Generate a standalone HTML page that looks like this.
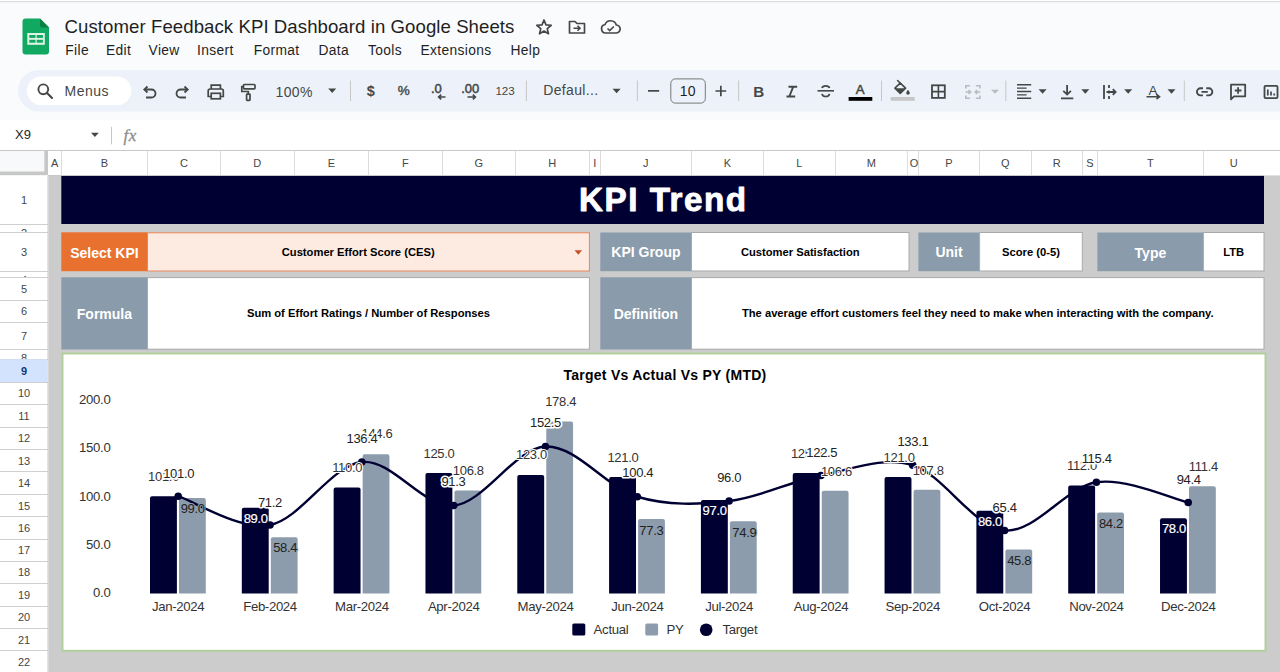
<!DOCTYPE html>
<html><head><meta charset="utf-8"><title>KPI Trend</title>
<style>
*{margin:0;padding:0}
html,body{width:1280px;height:672px;overflow:hidden;background:#ffffff}
svg{display:block;font-family:"Liberation Sans", sans-serif}
</style></head><body>
<svg width="1280" height="672" viewBox="0 0 1280 672">
<rect x="0" y="0" width="1280" height="120" fill="#f9fbfd"/>
<rect x="0" y="0" width="1280" height="1" fill="#ffffff"/>
<rect x="0" y="1" width="1280" height="1.2" fill="#dadce0"/>
<path d="M25.5 18.5 H40 L49 27.5 V51.5 Q49 54.5 46 54.5 H25.5 Q22.5 54.5 22.5 51.5 V21.5 Q22.5 18.5 25.5 18.5Z" fill="#11a861"/>
<path d="M40 18.5 L49 27.5 H42 Q40 27.5 40 25.5Z" fill="#0b8043"/>
<rect x="27.3" y="33" width="17.5" height="11.8" fill="#ddf3e4"/>
<rect x="29.3" y="35" width="6.2" height="2.9" fill="#11a861"/><rect x="36.7" y="35" width="6.2" height="2.9" fill="#11a861"/>
<rect x="29.3" y="39.8" width="6.2" height="2.9" fill="#11a861"/><rect x="36.7" y="39.8" width="6.2" height="2.9" fill="#11a861"/>
<text x="64.6" y="32.8" font-size="18.6" font-weight="400" fill="#1f1f1f" text-anchor="start" letter-spacing="0.07">Customer Feedback KPI Dashboard in Google Sheets</text>
<polygon points="544.00,20.00 546.00,24.85 551.23,25.25 547.23,28.65 548.47,33.75 544.00,31.00 539.53,33.75 540.77,28.65 536.77,25.25 542.00,24.85" fill="none" stroke="#444746" stroke-width="1.7" stroke-linejoin="round"/>
<path d="M569.5 21.5 H575 L577 23.5 H584.5 V33 H569.5 Z" fill="none" stroke="#444746" stroke-width="1.7" stroke-linejoin="round"/>
<path d="M573.5 28.2 H580 M577.5 25.7 L580 28.2 L577.5 30.7" fill="none" stroke="#444746" stroke-width="1.6"/>
<path d="M605.5 33 H616 A4 4 0 0 0 616.3 25 A6 6 0 0 0 605 24.5 A4.3 4.3 0 0 0 605.5 33Z" fill="none" stroke="#444746" stroke-width="1.7"/>
<path d="M607.5 28.5 L609.7 30.6 L613.8 26.5" fill="none" stroke="#444746" stroke-width="1.6"/>
<text x="65.3" y="54.7" font-size="13.8" font-weight="400" fill="#1f1f1f" text-anchor="start" letter-spacing="0.35">File</text>
<text x="106" y="54.7" font-size="13.8" font-weight="400" fill="#1f1f1f" text-anchor="start" letter-spacing="0.35">Edit</text>
<text x="148.6" y="54.7" font-size="13.8" font-weight="400" fill="#1f1f1f" text-anchor="start" letter-spacing="0.35">View</text>
<text x="197" y="54.7" font-size="13.8" font-weight="400" fill="#1f1f1f" text-anchor="start" letter-spacing="0.35">Insert</text>
<text x="253.7" y="54.7" font-size="13.8" font-weight="400" fill="#1f1f1f" text-anchor="start" letter-spacing="0.35">Format</text>
<text x="318.4" y="54.7" font-size="13.8" font-weight="400" fill="#1f1f1f" text-anchor="start" letter-spacing="0.35">Data</text>
<text x="368" y="54.7" font-size="13.8" font-weight="400" fill="#1f1f1f" text-anchor="start" letter-spacing="0.35">Tools</text>
<text x="420.5" y="54.7" font-size="13.8" font-weight="400" fill="#1f1f1f" text-anchor="start" letter-spacing="0.35">Extensions</text>
<text x="510.5" y="54.7" font-size="13.8" font-weight="400" fill="#1f1f1f" text-anchor="start" letter-spacing="0.35">Help</text>
<rect x="18" y="70" width="1300" height="41.5" rx="20.75" fill="#edf2fa"/>
<rect x="27" y="76.4" width="104.3" height="28.7" rx="14.35" fill="#ffffff"/>
<circle cx="43.3" cy="89.3" r="4.9" fill="none" stroke="#444746" stroke-width="1.9"/><path d="M46.8 92.8 L52 98" stroke="#444746" stroke-width="2.1" stroke-linecap="round"/>
<text x="64.6" y="95.8" font-size="14" font-weight="400" fill="#444746" text-anchor="start" letter-spacing="0.45">Menus</text>
<path d="M145 89.5 H151.5 A4 4 0 0 1 151.5 97.5 H146" fill="none" stroke="#444746" stroke-width="1.8"/><path d="M147.5 86.5 L144.3 89.5 L147.5 92.5" fill="none" stroke="#444746" stroke-width="1.8"/>
<path d="M187 89.5 H180.5 A4 4 0 0 0 180.5 97.5 H186" fill="none" stroke="#444746" stroke-width="1.8"/><path d="M184.5 86.5 L187.7 89.5 L184.5 92.5" fill="none" stroke="#444746" stroke-width="1.8"/>
<path d="M211.2 89 V85.2 H220.4 V89" fill="none" stroke="#444746" stroke-width="1.7"/>
<path d="M211 96.5 H208.2 V91 Q208.2 89 210.2 89 H221.3 Q223.3 89 223.3 91 V96.5 H220.5" fill="none" stroke="#444746" stroke-width="1.7"/>
<rect x="211.2" y="93.3" width="9.2" height="5.5" fill="none" stroke="#444746" stroke-width="1.7"/>
<rect x="243.5" y="84.5" width="11.5" height="4.3" rx="0.8" fill="none" stroke="#444746" stroke-width="1.7"/>
<path d="M243.5 86.7 H241.8 V91.5 H248.3 V94" fill="none" stroke="#444746" stroke-width="1.7"/><rect x="246.6" y="94.2" width="3.4" height="6.2" rx="0.6" fill="none" stroke="#444746" stroke-width="1.7"/>
<text x="275.5" y="97.1" font-size="14" font-weight="400" fill="#444746" text-anchor="start" letter-spacing="0.4">100%</text>
<path d="M328.2 88.6 L336.2 88.6 L332.2 93.0Z" fill="#444746"/>
<rect x="350.0" y="80.5" width="1" height="20.5" fill="#c7c7c7"/>
<text x="370.7" y="96.1" font-size="14.5" font-weight="700" fill="#444746" text-anchor="middle" >$</text>
<text x="403.8" y="95.3" font-size="13.5" font-weight="400" fill="#444746" text-anchor="middle" stroke="#444746" stroke-width="0.4">%</text>
<text x="436.3" y="92.6" font-size="13" font-weight="400" fill="#444746" text-anchor="middle" stroke="#444746" stroke-width="0.5">.0</text>
<path d="M445.5 97 H438.5 M441.2 94.6 L438.6 97 L441.2 99.4" fill="none" stroke="#444746" stroke-width="1.6"/>
<text x="470.2" y="92.6" font-size="13" font-weight="400" fill="#444746" text-anchor="middle" stroke="#444746" stroke-width="0.5">.00</text>
<path d="M467.5 97 H475.5 M472.8 94.6 L475.4 97 L472.8 99.4" fill="none" stroke="#444746" stroke-width="1.6"/>
<text x="505.1" y="95.1" font-size="11.6" font-weight="400" fill="#444746" text-anchor="middle" >123</text>
<rect x="525.9" y="80.5" width="1" height="20.5" fill="#c7c7c7"/>
<text x="543.2" y="95.1" font-size="14" font-weight="400" fill="#444746" text-anchor="start" letter-spacing="0.35">Defaul...</text>
<path d="M612.6 88.8 L620.6 88.8 L616.6 93.2Z" fill="#444746"/>
<rect x="636.9" y="80.5" width="1" height="20.5" fill="#c7c7c7"/>
<rect x="648" y="90" width="11.2" height="1.7" fill="#444746"/>
<rect x="670.8" y="78.9" width="34.5" height="24.2" rx="4.5" fill="none" stroke="#747775" stroke-width="1"/>
<text x="687.8" y="96.2" font-size="14" font-weight="400" fill="#1f1f1f" text-anchor="middle" letter-spacing="0.3">10</text>
<path d="M715.5 91 H726.2 M720.85 85.7 V96.3" stroke="#444746" stroke-width="1.7"/>
<rect x="738.1" y="80.5" width="1" height="20.5" fill="#c7c7c7"/>
<text x="758.8" y="97.1" font-size="15.2" font-weight="700" fill="#444746" text-anchor="middle" >B</text>
<path d="M788.5 86.7 H797.2 M786.5 96.5 H795.2 M793.3 86.7 L789.3 96.5" fill="none" stroke="#444746" stroke-width="1.9"/>
<path d="M817.5 90.8 H834" stroke="#444746" stroke-width="1.6"/><path d="M829.5 88 A3.8 2.6 0 0 0 822 88 M822 93.8 A3.8 3.2 0 0 0 829.5 93.8" fill="none" stroke="#444746" stroke-width="1.7"/>
<text x="860.2" y="94" font-size="13.2" font-weight="400" fill="#444746" text-anchor="middle" stroke="#444746" stroke-width="0.5">A</text>
<rect x="848.6" y="97" width="23.7" height="3.8" fill="#000000"/>
<rect x="881.0" y="80.5" width="1" height="20.5" fill="#c7c7c7"/>
<path d="M897.6 80.5 L901.3 84.2" stroke="#444746" stroke-width="1.6" stroke-linecap="round"/><path d="M900.2 83.2 L905.6 88.2 L900.2 93.3 L894.9 88.2Z" fill="none" stroke="#444746" stroke-width="1.6" stroke-linejoin="round"/><path d="M894.9 88.2 H905.6 L900.2 93.3Z" fill="#444746"/><path d="M908 89.8 Q906.2 92 906.2 93 A1.8 1.8 0 0 0 909.8 93 Q909.8 92 908 89.8Z" fill="#444746"/>
<rect x="890.7" y="97" width="24" height="3.8" fill="#c7c7c7"/>
<rect x="932" y="85.3" width="12.8" height="12.6" fill="none" stroke="#444746" stroke-width="1.8"/><path d="M938.4 85.3 V97.9 M932 91.6 H944.8" stroke="#444746" stroke-width="1.6"/>
<path d="M965.8 88.5 V85.7 H970 M975.8 85.7 H980 V88.5 M965.8 95.5 V98.3 H970 M975.8 98.3 H980 V95.5" fill="none" stroke="#b8bcc0" stroke-width="1.6"/><path d="M965.5 92 H970.5 M968.5 90 L970.7 92 L968.5 94 M980.3 92 H975.3 M977.3 90 L975.1 92 L977.3 94" fill="none" stroke="#b8bcc0" stroke-width="1.5"/>
<path d="M991.0 89.8 L999.0 89.8 L995 93.8Z" fill="#b8bcc0"/>
<rect x="1005.3" y="80.5" width="1" height="20.5" fill="#c7c7c7"/>
<path d="M1017 84.7 H1031.2 M1017 88.1 H1026.6 M1017 91.5 H1031.2 M1017 94.9 H1026.6 M1017 98.3 H1031.2" stroke="#444746" stroke-width="1.4"/>
<path d="M1038.6 89.3 L1046.6 89.3 L1042.6 93.7Z" fill="#444746"/>
<path d="M1067.1 85 V94.5 M1063.3 90.8 L1067.1 94.6 L1070.9 90.8 M1061 98.3 H1073.3" fill="none" stroke="#444746" stroke-width="1.8"/>
<path d="M1081.3 89.3 L1089.3 89.3 L1085.3 93.7Z" fill="#444746"/>
<path d="M1104 85 V99 M1109 85 V88 M1109 90.5 V93.5 M1109 96 V99 M1106.5 92 H1115.5 M1112.8 89.2 L1115.6 92 L1112.8 94.8" fill="none" stroke="#444746" stroke-width="1.8"/>
<path d="M1124.2 89.3 L1132.2 89.3 L1128.2 93.7Z" fill="#444746"/>
<text x="1153" y="94.5" font-size="13.5" font-weight="400" fill="#444746" text-anchor="middle" >A</text>
<path d="M1146.5 96.7 H1159 M1156.5 94.5 L1159.5 96.7 L1156.5 99" fill="none" stroke="#444746" stroke-width="1.6"/>
<path d="M1167.5 89.3 L1175.5 89.3 L1171.5 93.7Z" fill="#444746"/>
<rect x="1183.8" y="80.5" width="1" height="20.5" fill="#c7c7c7"/>
<path d="M1203 88.3 H1200.5 A3.55 3.55 0 0 0 1200.5 95.4 H1203 M1206.3 88.3 H1208.8 A3.55 3.55 0 0 1 1208.8 95.4 H1206.3 M1201.5 91.85 H1207.8" fill="none" stroke="#444746" stroke-width="1.9"/>
<path d="M1231 84.7 H1245.2 V96.3 H1234 L1231 99.3Z" fill="none" stroke="#444746" stroke-width="1.8" stroke-linejoin="round"/><path d="M1238.1 87.2 V93.8 M1234.8 90.5 H1241.4" stroke="#444746" stroke-width="1.8"/>
<rect x="1264.5" y="85.9" width="13" height="12.2" rx="1" fill="none" stroke="#444746" stroke-width="1.8"/><path d="M1267.8 89.5 V95.5 M1271 91.5 V95.5 M1274.2 93.5 V95.5" stroke="#444746" stroke-width="1.7"/>
<rect x="0" y="120.5" width="1280" height="30" fill="#ffffff"/>
<text x="15" y="138.6" font-size="13" font-weight="400" fill="#1f1f1f" text-anchor="start" >X9</text>
<path d="M91.0 132.75 L98.80000000000001 132.75 L94.9 137.05Z" fill="#444746"/>
<rect x="111" y="126.8" width="1" height="17.5" fill="#c7c7c7"/>
<text x="123.5" y="140.6" font-size="17" font-family="Liberation Serif" font-style="italic" fill="#8f8f8f" stroke="#8f8f8f" stroke-width="0.35" letter-spacing="0.6">fx</text>
<rect x="0" y="150" width="1280" height="1" fill="#c7c7c7"/>
<rect x="0" y="151" width="1280" height="25" fill="#ffffff"/>
<rect x="0" y="151" width="44.3" height="20.5" fill="#f8f9fa"/>
<rect x="44.3" y="151" width="3.7" height="24" fill="#c7c7c7"/>
<rect x="0" y="171.5" width="48" height="3.7" fill="#c7c7c7"/>
<rect x="61" y="151" width="1" height="24" fill="#dcdcdc"/>
<text x="54.65" y="167" font-size="11" font-weight="400" fill="#444746" text-anchor="middle" >A</text>
<rect x="147" y="151" width="1" height="24" fill="#dcdcdc"/>
<text x="104.4" y="167" font-size="11" font-weight="400" fill="#444746" text-anchor="middle" >B</text>
<rect x="220" y="151" width="1" height="24" fill="#dcdcdc"/>
<text x="184.0" y="167" font-size="11" font-weight="400" fill="#444746" text-anchor="middle" >C</text>
<rect x="294" y="151" width="1" height="24" fill="#dcdcdc"/>
<text x="257.3" y="167" font-size="11" font-weight="400" fill="#444746" text-anchor="middle" >D</text>
<rect x="368" y="151" width="1" height="24" fill="#dcdcdc"/>
<text x="331.35" y="167" font-size="11" font-weight="400" fill="#444746" text-anchor="middle" >E</text>
<rect x="442" y="151" width="1" height="24" fill="#dcdcdc"/>
<text x="405.45000000000005" y="167" font-size="11" font-weight="400" fill="#444746" text-anchor="middle" >F</text>
<rect x="515" y="151" width="1" height="24" fill="#dcdcdc"/>
<text x="478.85" y="167" font-size="11" font-weight="400" fill="#444746" text-anchor="middle" >G</text>
<rect x="589" y="151" width="1" height="24" fill="#dcdcdc"/>
<text x="552.3499999999999" y="167" font-size="11" font-weight="400" fill="#444746" text-anchor="middle" >H</text>
<rect x="600" y="151" width="1" height="24" fill="#dcdcdc"/>
<text x="594.8" y="167" font-size="11" font-weight="400" fill="#444746" text-anchor="middle" >I</text>
<rect x="691" y="151" width="1" height="24" fill="#dcdcdc"/>
<text x="645.75" y="167" font-size="11" font-weight="400" fill="#444746" text-anchor="middle" >J</text>
<rect x="763" y="151" width="1" height="24" fill="#dcdcdc"/>
<text x="727.35" y="167" font-size="11" font-weight="400" fill="#444746" text-anchor="middle" >K</text>
<rect x="835" y="151" width="1" height="24" fill="#dcdcdc"/>
<text x="799.35" y="167" font-size="11" font-weight="400" fill="#444746" text-anchor="middle" >L</text>
<rect x="907" y="151" width="1" height="24" fill="#dcdcdc"/>
<text x="871.3" y="167" font-size="11" font-weight="400" fill="#444746" text-anchor="middle" >M</text>
<rect x="918" y="151" width="1" height="24" fill="#dcdcdc"/>
<text x="914.0999999999999" y="167" font-size="11" font-weight="400" fill="#444746" text-anchor="middle" >O</text>
<rect x="979" y="151" width="1" height="24" fill="#dcdcdc"/>
<text x="949.0" y="167" font-size="11" font-weight="400" fill="#444746" text-anchor="middle" >P</text>
<rect x="1031" y="151" width="1" height="24" fill="#dcdcdc"/>
<text x="1005.4000000000001" y="167" font-size="11" font-weight="400" fill="#444746" text-anchor="middle" >Q</text>
<rect x="1082" y="151" width="1" height="24" fill="#dcdcdc"/>
<text x="1056.75" y="167" font-size="11" font-weight="400" fill="#444746" text-anchor="middle" >R</text>
<rect x="1097" y="151" width="1" height="24" fill="#dcdcdc"/>
<text x="1089.85" y="167" font-size="11" font-weight="400" fill="#444746" text-anchor="middle" >S</text>
<rect x="1203" y="151" width="1" height="24" fill="#dcdcdc"/>
<text x="1150.4" y="167" font-size="11" font-weight="400" fill="#444746" text-anchor="middle" >T</text>
<rect x="1264" y="151" width="1" height="24" fill="#dcdcdc"/>
<text x="1233.7" y="167" font-size="11" font-weight="400" fill="#444746" text-anchor="middle" >U</text>
<rect x="906.9" y="151" width="1" height="25" fill="#e1e1e1"/>
<rect x="1264" y="175" width="16" height="1" fill="#e1e1e1"/>
<rect x="48" y="175" width="1216" height="1" fill="#c7c7c7"/>
<rect x="0" y="176" width="48" height="496" fill="#ffffff"/>
<defs><clipPath id="rc1"><rect x="0" y="176" width="48" height="48"/></clipPath><clipPath id="rc2"><rect x="0" y="224" width="48" height="8.099999999999994"/></clipPath><clipPath id="rc3"><rect x="0" y="232.1" width="48" height="39.29999999999998"/></clipPath><clipPath id="rc4"><rect x="0" y="271.4" width="48" height="5.7000000000000455"/></clipPath><clipPath id="rc5"><rect x="0" y="277.1" width="48" height="22.899999999999977"/></clipPath><clipPath id="rc6"><rect x="0" y="300" width="48" height="22.30000000000001"/></clipPath><clipPath id="rc7"><rect x="0" y="322.3" width="48" height="26.69999999999999"/></clipPath><clipPath id="rc8"><rect x="0" y="349" width="48" height="10.300000000000011"/></clipPath><clipPath id="rc9"><rect x="0" y="359.3" width="48" height="22.69999999999999"/></clipPath><clipPath id="rc10"><rect x="0" y="382" width="48" height="22.100000000000023"/></clipPath><clipPath id="rc11"><rect x="0" y="404.1" width="48" height="22.799999999999955"/></clipPath><clipPath id="rc12"><rect x="0" y="426.9" width="48" height="22.80000000000001"/></clipPath><clipPath id="rc13"><rect x="0" y="449.7" width="48" height="21.900000000000034"/></clipPath><clipPath id="rc14"><rect x="0" y="471.6" width="48" height="22.799999999999955"/></clipPath><clipPath id="rc15"><rect x="0" y="494.4" width="48" height="22.399999999999977"/></clipPath><clipPath id="rc16"><rect x="0" y="516.8" width="48" height="22.40000000000009"/></clipPath><clipPath id="rc17"><rect x="0" y="539.2" width="48" height="22.199999999999932"/></clipPath><clipPath id="rc18"><rect x="0" y="561.4" width="48" height="21.899999999999977"/></clipPath><clipPath id="rc19"><rect x="0" y="583.3" width="48" height="23.0"/></clipPath><clipPath id="rc20"><rect x="0" y="606.3" width="48" height="22.200000000000045"/></clipPath><clipPath id="rc21"><rect x="0" y="628.5" width="48" height="22.100000000000023"/></clipPath><clipPath id="rc22"><rect x="0" y="650.6" width="48" height="22.199999999999932"/></clipPath></defs>
<g clip-path="url(#rc1)"><text x="24" y="204.0" font-size="11" font-weight="400" fill="#444746" text-anchor="middle" >1</text></g>
<rect x="0" y="224" width="48" height="1" fill="#d0d0d0"/>
<g clip-path="url(#rc2)"><text x="24" y="236.6" font-size="11" font-weight="400" fill="#444746" text-anchor="middle" >2</text></g>
<rect x="0" y="232" width="48" height="1" fill="#d0d0d0"/>
<g clip-path="url(#rc3)"><text x="24" y="255.75" font-size="11" font-weight="400" fill="#444746" text-anchor="middle" >3</text></g>
<rect x="0" y="271" width="48" height="1" fill="#d0d0d0"/>
<g clip-path="url(#rc4)"><text x="24" y="284.0" font-size="11" font-weight="400" fill="#444746" text-anchor="middle" >4</text></g>
<rect x="0" y="277" width="48" height="1" fill="#d0d0d0"/>
<g clip-path="url(#rc5)"><text x="24" y="292.55" font-size="11" font-weight="400" fill="#444746" text-anchor="middle" >5</text></g>
<rect x="0" y="300" width="48" height="1" fill="#d0d0d0"/>
<g clip-path="url(#rc6)"><text x="24" y="315.15" font-size="11" font-weight="400" fill="#444746" text-anchor="middle" >6</text></g>
<rect x="0" y="322" width="48" height="1" fill="#d0d0d0"/>
<g clip-path="url(#rc7)"><text x="24" y="339.65" font-size="11" font-weight="400" fill="#444746" text-anchor="middle" >7</text></g>
<rect x="0" y="349" width="48" height="1" fill="#d0d0d0"/>
<g clip-path="url(#rc8)"><text x="24" y="361.6" font-size="11" font-weight="400" fill="#444746" text-anchor="middle" >8</text></g>
<rect x="0" y="359" width="48" height="1" fill="#d0d0d0"/>
<rect x="0" y="359.3" width="47" height="22.69999999999999" fill="#d3e3fd"/>
<text x="24" y="374.65" font-size="11" font-weight="700" fill="#0b3a7a" text-anchor="middle" >9</text>
<rect x="0" y="382" width="48" height="1" fill="#d0d0d0"/>
<g clip-path="url(#rc10)"><text x="24" y="397.05" font-size="11" font-weight="400" fill="#444746" text-anchor="middle" >10</text></g>
<rect x="0" y="404" width="48" height="1" fill="#d0d0d0"/>
<g clip-path="url(#rc11)"><text x="24" y="419.5" font-size="11" font-weight="400" fill="#444746" text-anchor="middle" >11</text></g>
<rect x="0" y="427" width="48" height="1" fill="#d0d0d0"/>
<g clip-path="url(#rc12)"><text x="24" y="442.29999999999995" font-size="11" font-weight="400" fill="#444746" text-anchor="middle" >12</text></g>
<rect x="0" y="449" width="48" height="1" fill="#d0d0d0"/>
<g clip-path="url(#rc13)"><text x="24" y="464.65" font-size="11" font-weight="400" fill="#444746" text-anchor="middle" >13</text></g>
<rect x="0" y="471" width="48" height="1" fill="#d0d0d0"/>
<g clip-path="url(#rc14)"><text x="24" y="487.0" font-size="11" font-weight="400" fill="#444746" text-anchor="middle" >14</text></g>
<rect x="0" y="494" width="48" height="1" fill="#d0d0d0"/>
<g clip-path="url(#rc15)"><text x="24" y="509.59999999999997" font-size="11" font-weight="400" fill="#444746" text-anchor="middle" >15</text></g>
<rect x="0" y="516" width="48" height="1" fill="#d0d0d0"/>
<g clip-path="url(#rc16)"><text x="24" y="532.0" font-size="11" font-weight="400" fill="#444746" text-anchor="middle" >16</text></g>
<rect x="0" y="539" width="48" height="1" fill="#d0d0d0"/>
<g clip-path="url(#rc17)"><text x="24" y="554.3" font-size="11" font-weight="400" fill="#444746" text-anchor="middle" >17</text></g>
<rect x="0" y="561" width="48" height="1" fill="#d0d0d0"/>
<g clip-path="url(#rc18)"><text x="24" y="576.3499999999999" font-size="11" font-weight="400" fill="#444746" text-anchor="middle" >18</text></g>
<rect x="0" y="583" width="48" height="1" fill="#d0d0d0"/>
<g clip-path="url(#rc19)"><text x="24" y="598.8" font-size="11" font-weight="400" fill="#444746" text-anchor="middle" >19</text></g>
<rect x="0" y="606" width="48" height="1" fill="#d0d0d0"/>
<g clip-path="url(#rc20)"><text x="24" y="621.4" font-size="11" font-weight="400" fill="#444746" text-anchor="middle" >20</text></g>
<rect x="0" y="628" width="48" height="1" fill="#d0d0d0"/>
<g clip-path="url(#rc21)"><text x="24" y="643.55" font-size="11" font-weight="400" fill="#444746" text-anchor="middle" >21</text></g>
<rect x="0" y="650" width="48" height="1" fill="#d0d0d0"/>
<g clip-path="url(#rc22)"><text x="24" y="665.7" font-size="11" font-weight="400" fill="#444746" text-anchor="middle" >22</text></g>
<rect x="0" y="672" width="48" height="1" fill="#d0d0d0"/>
<rect x="47.5" y="176" width="1" height="496" fill="#c7c7c7"/>
<rect x="48.5" y="176" width="1231.5" height="496" fill="#cccccc"/>
<rect x="1264" y="151" width="16" height="24" fill="#ffffff"/>
<rect x="61.3" y="176" width="1202.7" height="48" fill="#000033"/>
<text x="663.3" y="211.3" font-size="33.2" font-weight="700" fill="#ffffff" text-anchor="middle" letter-spacing="1.5" stroke="#ffffff" stroke-width="0.9" stroke-linejoin="round">KPI Trend</text>
<rect x="61.3" y="232.3" width="86.2" height="38.89999999999998" fill="#e97130"/>
<text x="104.4" y="257.5" font-size="14" font-weight="700" fill="#ffffff" text-anchor="middle" >Select KPI</text>
<rect x="147.5" y="232.8" width="441.9" height="38.19999999999999" fill="#fdebe1" stroke="#e9875a" stroke-width="1"/>
<text x="358.2" y="255.6" font-size="11.2" font-weight="700" fill="#000000" text-anchor="middle" >Customer Effort Score (CES)</text>
<path d="M574.55 250.25 L582.05 250.25 L578.3 254.75Z" fill="#c5502a"/>
<rect x="600.3" y="232.5" width="91.20000000000005" height="38.69999999999999" fill="#8a9bac"/>
<text x="645.9" y="257.3" font-size="14" font-weight="700" fill="#ffffff" text-anchor="middle" >KPI Group</text>
<rect x="691.5" y="232.5" width="217.5" height="38.5" fill="#ffffff" stroke="#a9a9a9" stroke-width="1"/>
<text x="800.25" y="255.6" font-size="11.2" font-weight="700" fill="#000000" text-anchor="middle" >Customer Satisfaction</text>
<rect x="918.4" y="232.5" width="61.200000000000045" height="38.69999999999999" fill="#8a9bac"/>
<text x="949.0" y="257.3" font-size="14" font-weight="700" fill="#ffffff" text-anchor="middle" >Unit</text>
<rect x="979.6" y="232.5" width="102.69999999999993" height="38.5" fill="#ffffff" stroke="#a9a9a9" stroke-width="1"/>
<text x="1030.95" y="255.6" font-size="11.2" font-weight="700" fill="#000000" text-anchor="middle" >Score (0-5)</text>
<rect x="1097.4" y="232.5" width="106.0" height="38.69999999999999" fill="#8a9bac"/>
<text x="1150.4" y="257.8" font-size="14" font-weight="700" fill="#ffffff" text-anchor="middle" >Type</text>
<rect x="1203.4" y="232.5" width="60.59999999999991" height="38.5" fill="#ffffff" stroke="#a9a9a9" stroke-width="1"/>
<text x="1233.7" y="255.6" font-size="11.2" font-weight="700" fill="#000000" text-anchor="middle" >LTB</text>
<rect x="61.3" y="277.3" width="86.2" height="72.19999999999999" fill="#8a9bac"/>
<text x="104.4" y="319" font-size="14" font-weight="700" fill="#ffffff" text-anchor="middle" >Formula</text>
<rect x="147.5" y="277.6" width="441.9" height="71.59999999999997" fill="#ffffff" stroke="#a9a9a9" stroke-width="1"/>
<text x="368.45" y="317.2" font-size="11.2" font-weight="700" fill="#000000" text-anchor="middle" >Sum of Effort Ratings / Number of Responses</text>
<rect x="600.3" y="277.3" width="91.20000000000005" height="72.19999999999999" fill="#8a9bac"/>
<text x="645.9" y="319" font-size="14" font-weight="700" fill="#ffffff" text-anchor="middle" >Definition</text>
<rect x="691.5" y="277.6" width="572.5" height="71.59999999999997" fill="#ffffff" stroke="#a9a9a9" stroke-width="1"/>
<text x="977.75" y="317.2" font-size="11.2" font-weight="700" fill="#000000" text-anchor="middle" >The average effort customers feel they need to make when interacting with the company.</text>
<rect x="62.5" y="353.5" width="1203.0" height="297.29999999999995" fill="#ffffff" stroke="#b1cf9b" stroke-width="2"/>
<text x="665" y="380.1" font-size="14" font-weight="700" fill="#000000" text-anchor="middle" letter-spacing="0.26">Target Vs Actual Vs PY (MTD)</text>
<text x="110.5" y="597.0" font-size="13.2" font-weight="400" fill="#333333" text-anchor="end" letter-spacing="-0.3">0.0</text>
<text x="110.5" y="548.775" font-size="13.2" font-weight="400" fill="#333333" text-anchor="end" letter-spacing="-0.3">50.0</text>
<text x="110.5" y="500.55" font-size="13.2" font-weight="400" fill="#333333" text-anchor="end" letter-spacing="-0.3">100.0</text>
<text x="110.5" y="452.325" font-size="13.2" font-weight="400" fill="#333333" text-anchor="end" letter-spacing="-0.3">150.0</text>
<text x="110.5" y="404.1" font-size="13.2" font-weight="400" fill="#333333" text-anchor="end" letter-spacing="-0.3">200.0</text>
<path d="M150.0 593.6 V498.18550000000005 Q150.0 496.18550000000005 152.0 496.18550000000005 H174.89999999999998 Q176.89999999999998 496.18550000000005 176.89999999999998 498.18550000000005 V593.6Z" fill="#000033"/>
<path d="M179.0 593.6 V500.1145 Q179.0 498.1145 181.0 498.1145 H203.79999999999998 Q205.79999999999998 498.1145 205.79999999999998 500.1145 V593.6Z" fill="#8c9cac"/>
<text x="178.2" y="611.3" font-size="13.2" font-weight="400" fill="#333333" text-anchor="middle" letter-spacing="-0.35">Jan-2024</text>
<path d="M241.82 593.6 V509.7595 Q241.82 507.7595 243.82 507.7595 H266.71999999999997 Q268.71999999999997 507.7595 268.71999999999997 509.7595 V593.6Z" fill="#000033"/>
<path d="M270.82 593.6 V539.2732 Q270.82 537.2732 272.82 537.2732 H295.62 Q297.62 537.2732 297.62 539.2732 V593.6Z" fill="#8c9cac"/>
<text x="270.02" y="611.3" font-size="13.2" font-weight="400" fill="#333333" text-anchor="middle" letter-spacing="-0.35">Feb-2024</text>
<path d="M333.64 593.6 V489.505 Q333.64 487.505 335.64 487.505 H358.53999999999996 Q360.53999999999996 487.505 360.53999999999996 489.505 V593.6Z" fill="#000033"/>
<path d="M362.64 593.6 V456.1333 Q362.64 454.1333 364.64 454.1333 H387.44 Q389.44 454.1333 389.44 456.1333 V593.6Z" fill="#8c9cac"/>
<text x="361.84" y="611.3" font-size="13.2" font-weight="400" fill="#333333" text-anchor="middle" letter-spacing="-0.35">Mar-2024</text>
<path d="M425.46 593.6 V475.0375 Q425.46 473.0375 427.46 473.0375 H450.35999999999996 Q452.35999999999996 473.0375 452.35999999999996 475.0375 V593.6Z" fill="#000033"/>
<path d="M454.46 593.6 V492.5914 Q454.46 490.5914 456.46 490.5914 H479.26 Q481.26 490.5914 481.26 492.5914 V593.6Z" fill="#8c9cac"/>
<text x="453.65999999999997" y="611.3" font-size="13.2" font-weight="400" fill="#333333" text-anchor="middle" letter-spacing="-0.35">Apr-2024</text>
<path d="M517.28 593.6 V476.9665 Q517.28 474.9665 519.28 474.9665 H542.1800000000001 Q544.1800000000001 474.9665 544.1800000000001 476.9665 V593.6Z" fill="#000033"/>
<path d="M546.28 593.6 V423.5332 Q546.28 421.5332 548.28 421.5332 H571.08 Q573.08 421.5332 573.08 423.5332 V593.6Z" fill="#8c9cac"/>
<text x="545.48" y="611.3" font-size="13.2" font-weight="400" fill="#333333" text-anchor="middle" letter-spacing="-0.35">May-2024</text>
<path d="M609.0999999999999 593.6 V478.8955 Q609.0999999999999 476.8955 611.0999999999999 476.8955 H634.0 Q636.0 476.8955 636.0 478.8955 V593.6Z" fill="#000033"/>
<path d="M638.0999999999999 593.6 V521.0441500000001 Q638.0999999999999 519.0441500000001 640.0999999999999 519.0441500000001 H662.9 Q664.9 519.0441500000001 664.9 521.0441500000001 V593.6Z" fill="#8c9cac"/>
<text x="637.3" y="611.3" font-size="13.2" font-weight="400" fill="#333333" text-anchor="middle" letter-spacing="-0.35">Jun-2024</text>
<path d="M700.9199999999998 593.6 V502.0435 Q700.9199999999998 500.0435 702.9199999999998 500.0435 H725.8199999999999 Q727.8199999999999 500.0435 727.8199999999999 502.0435 V593.6Z" fill="#000033"/>
<path d="M729.9199999999998 593.6 V523.35895 Q729.9199999999998 521.35895 731.9199999999998 521.35895 H754.7199999999999 Q756.7199999999999 521.35895 756.7199999999999 523.35895 V593.6Z" fill="#8c9cac"/>
<text x="729.1199999999999" y="611.3" font-size="13.2" font-weight="400" fill="#333333" text-anchor="middle" letter-spacing="-0.35">Jul-2024</text>
<path d="M792.74 593.6 V475.0375 Q792.74 473.0375 794.74 473.0375 H817.6400000000001 Q819.6400000000001 473.0375 819.6400000000001 475.0375 V593.6Z" fill="#000033"/>
<path d="M821.74 593.6 V492.78430000000003 Q821.74 490.78430000000003 823.74 490.78430000000003 H846.5400000000001 Q848.5400000000001 490.78430000000003 848.5400000000001 492.78430000000003 V593.6Z" fill="#8c9cac"/>
<text x="820.94" y="611.3" font-size="13.2" font-weight="400" fill="#333333" text-anchor="middle" letter-spacing="-0.35">Aug-2024</text>
<path d="M884.56 593.6 V478.8955 Q884.56 476.8955 886.56 476.8955 H909.46 Q911.46 476.8955 911.46 478.8955 V593.6Z" fill="#000033"/>
<path d="M913.56 593.6 V491.62690000000003 Q913.56 489.62690000000003 915.56 489.62690000000003 H938.36 Q940.36 489.62690000000003 940.36 491.62690000000003 V593.6Z" fill="#8c9cac"/>
<text x="912.76" y="611.3" font-size="13.2" font-weight="400" fill="#333333" text-anchor="middle" letter-spacing="-0.35">Sep-2024</text>
<path d="M976.3799999999999 593.6 V512.653 Q976.3799999999999 510.653 978.3799999999999 510.653 H1001.28 Q1003.28 510.653 1003.28 512.653 V593.6Z" fill="#000033"/>
<path d="M1005.3799999999999 593.6 V551.4259000000001 Q1005.3799999999999 549.4259000000001 1007.3799999999999 549.4259000000001 H1030.1799999999998 Q1032.1799999999998 549.4259000000001 1032.1799999999998 551.4259000000001 V593.6Z" fill="#8c9cac"/>
<text x="1004.5799999999999" y="611.3" font-size="13.2" font-weight="400" fill="#333333" text-anchor="middle" letter-spacing="-0.35">Oct-2024</text>
<path d="M1068.1999999999998 593.6 V487.576 Q1068.1999999999998 485.576 1070.1999999999998 485.576 H1093.1 Q1095.1 485.576 1095.1 487.576 V593.6Z" fill="#000033"/>
<path d="M1097.1999999999998 593.6 V514.3891 Q1097.1999999999998 512.3891 1099.1999999999998 512.3891 H1121.9999999999998 Q1123.9999999999998 512.3891 1123.9999999999998 514.3891 V593.6Z" fill="#8c9cac"/>
<text x="1096.3999999999999" y="611.3" font-size="13.2" font-weight="400" fill="#333333" text-anchor="middle" letter-spacing="-0.35">Nov-2024</text>
<path d="M1160.02 593.6 V520.369 Q1160.02 518.369 1162.02 518.369 H1184.92 Q1186.92 518.369 1186.92 520.369 V593.6Z" fill="#000033"/>
<path d="M1189.02 593.6 V488.15470000000005 Q1189.02 486.15470000000005 1191.02 486.15470000000005 H1213.82 Q1215.82 486.15470000000005 1215.82 488.15470000000005 V593.6Z" fill="#8c9cac"/>
<text x="1188.22" y="611.3" font-size="13.2" font-weight="400" fill="#333333" text-anchor="middle" letter-spacing="-0.35">Dec-2024</text>
<path d="M178.20 496.19 C193.50 500.98 239.41 530.62 270.02 524.93 C300.63 519.24 331.23 465.27 361.84 462.04 C392.45 458.81 423.05 508.13 453.66 505.54 C484.27 502.95 514.87 447.98 545.48 446.51 C576.09 445.05 606.69 487.68 637.30 496.76 C667.91 505.85 698.51 504.56 729.12 501.01 C759.73 497.46 790.33 481.41 820.94 475.45 C851.55 469.48 882.15 456.05 912.76 465.23 C943.37 474.40 973.97 527.68 1004.58 530.52 C1035.19 533.37 1065.79 486.96 1096.40 482.30 C1127.01 477.63 1172.92 499.18 1188.22 502.55" fill="none" stroke="#000033" stroke-width="2.4"/>
<circle cx="178.20" cy="496.19" r="3.8" fill="#000033"/>
<circle cx="270.02" cy="524.93" r="3.8" fill="#000033"/>
<circle cx="361.84" cy="462.04" r="3.8" fill="#000033"/>
<circle cx="453.66" cy="505.54" r="3.8" fill="#000033"/>
<circle cx="545.48" cy="446.51" r="3.8" fill="#000033"/>
<circle cx="637.30" cy="496.76" r="3.8" fill="#000033"/>
<circle cx="729.12" cy="501.01" r="3.8" fill="#000033"/>
<circle cx="820.94" cy="475.45" r="3.8" fill="#000033"/>
<circle cx="912.76" cy="465.23" r="3.8" fill="#000033"/>
<circle cx="1004.58" cy="530.52" r="3.8" fill="#000033"/>
<circle cx="1096.40" cy="482.30" r="3.8" fill="#000033"/>
<circle cx="1188.22" cy="502.55" r="3.8" fill="#000033"/>
<text x="163.6" y="480.9" font-size="13" font-weight="400" fill="#333333" text-anchor="middle" letter-spacing="-0.3" stroke="#ffffff" stroke-width="2" paint-order="stroke" stroke-linejoin="round">101.0</text>
<text x="255.7" y="523" font-size="13" font-weight="400" fill="#ffffff" text-anchor="middle" letter-spacing="-0.3" stroke="#ffffff" stroke-width="0.2">89.0</text>
<text x="347.2" y="471.8" font-size="13" font-weight="400" fill="#333333" text-anchor="middle" letter-spacing="-0.3" stroke="#ffffff" stroke-width="2" paint-order="stroke" stroke-linejoin="round">110.0</text>
<text x="439" y="457.8" font-size="13" font-weight="400" fill="#333333" text-anchor="middle" letter-spacing="-0.3" stroke="#ffffff" stroke-width="2" paint-order="stroke" stroke-linejoin="round">125.0</text>
<text x="531.5" y="459.3" font-size="13" font-weight="400" fill="#333333" text-anchor="middle" letter-spacing="-0.3" stroke="#ffffff" stroke-width="2" paint-order="stroke" stroke-linejoin="round">123.0</text>
<text x="622.9" y="461.7" font-size="13" font-weight="400" fill="#333333" text-anchor="middle" letter-spacing="-0.3" stroke="#ffffff" stroke-width="2" paint-order="stroke" stroke-linejoin="round">121.0</text>
<text x="714.6" y="514.8" font-size="13" font-weight="400" fill="#ffffff" text-anchor="middle" letter-spacing="-0.3" stroke="#ffffff" stroke-width="0.2">97.0</text>
<text x="806.4" y="457.7" font-size="13" font-weight="400" fill="#333333" text-anchor="middle" letter-spacing="-0.3" stroke="#ffffff" stroke-width="2" paint-order="stroke" stroke-linejoin="round">125.0</text>
<text x="899.1" y="462.1" font-size="13" font-weight="400" fill="#333333" text-anchor="middle" letter-spacing="-0.3" stroke="#ffffff" stroke-width="2" paint-order="stroke" stroke-linejoin="round">121.0</text>
<text x="990" y="526" font-size="13" font-weight="400" fill="#ffffff" text-anchor="middle" letter-spacing="-0.3" stroke="#ffffff" stroke-width="0.2">86.0</text>
<text x="1082" y="469.7" font-size="13" font-weight="400" fill="#333333" text-anchor="middle" letter-spacing="-0.3" stroke="#ffffff" stroke-width="2" paint-order="stroke" stroke-linejoin="round">112.0</text>
<text x="1174" y="533.4" font-size="13" font-weight="400" fill="#ffffff" text-anchor="middle" letter-spacing="-0.3" stroke="#ffffff" stroke-width="0.2">78.0</text>
<text x="192.75" y="512.8" font-size="13" font-weight="400" fill="#222222" text-anchor="middle" letter-spacing="-0.3" stroke="#8c9cac" stroke-width="2" paint-order="stroke" stroke-linejoin="round">99.0</text>
<text x="285.2" y="551.5" font-size="13" font-weight="400" fill="#222222" text-anchor="middle" letter-spacing="-0.3" stroke="#8c9cac" stroke-width="2" paint-order="stroke" stroke-linejoin="round">58.4</text>
<text x="377" y="438.3" font-size="13" font-weight="400" fill="#333333" text-anchor="middle" letter-spacing="-0.3" stroke="#ffffff" stroke-width="2" paint-order="stroke" stroke-linejoin="round">144.6</text>
<text x="468.3" y="475.1" font-size="13" font-weight="400" fill="#333333" text-anchor="middle" letter-spacing="-0.3" stroke="#ffffff" stroke-width="2" paint-order="stroke" stroke-linejoin="round">106.8</text>
<text x="560.7" y="406" font-size="13" font-weight="400" fill="#333333" text-anchor="middle" letter-spacing="-0.3" stroke="#ffffff" stroke-width="2" paint-order="stroke" stroke-linejoin="round">178.4</text>
<text x="651.4" y="534.5" font-size="13" font-weight="400" fill="#222222" text-anchor="middle" letter-spacing="-0.3" stroke="#8c9cac" stroke-width="2" paint-order="stroke" stroke-linejoin="round">77.3</text>
<text x="744.4" y="536.5" font-size="13" font-weight="400" fill="#222222" text-anchor="middle" letter-spacing="-0.3" stroke="#8c9cac" stroke-width="2" paint-order="stroke" stroke-linejoin="round">74.9</text>
<text x="836.4" y="476.2" font-size="13" font-weight="400" fill="#333333" text-anchor="middle" letter-spacing="-0.3" stroke="#ffffff" stroke-width="2" paint-order="stroke" stroke-linejoin="round">106.6</text>
<text x="928.2" y="475.1" font-size="13" font-weight="400" fill="#333333" text-anchor="middle" letter-spacing="-0.3" stroke="#ffffff" stroke-width="2" paint-order="stroke" stroke-linejoin="round">107.8</text>
<text x="1019.2" y="565.2" font-size="13" font-weight="400" fill="#222222" text-anchor="middle" letter-spacing="-0.3" stroke="#8c9cac" stroke-width="2" paint-order="stroke" stroke-linejoin="round">45.8</text>
<text x="1111" y="527.5" font-size="13" font-weight="400" fill="#222222" text-anchor="middle" letter-spacing="-0.3" stroke="#8c9cac" stroke-width="2" paint-order="stroke" stroke-linejoin="round">84.2</text>
<text x="1203.4" y="470.5" font-size="13" font-weight="400" fill="#333333" text-anchor="middle" letter-spacing="-0.3" stroke="#ffffff" stroke-width="2" paint-order="stroke" stroke-linejoin="round">111.4</text>
<text x="178.7" y="477.8" font-size="13" font-weight="400" fill="#222222" text-anchor="middle" letter-spacing="-0.3" stroke="#ffffff" stroke-width="3.2" paint-order="stroke" stroke-linejoin="round">101.0</text>
<text x="270" y="506.5" font-size="13" font-weight="400" fill="#222222" text-anchor="middle" letter-spacing="-0.3" stroke="#ffffff" stroke-width="3.2" paint-order="stroke" stroke-linejoin="round">71.2</text>
<text x="362" y="442.8" font-size="13" font-weight="400" fill="#222222" text-anchor="middle" letter-spacing="-0.3" stroke="#ffffff" stroke-width="3.2" paint-order="stroke" stroke-linejoin="round">136.4</text>
<text x="453.5" y="486.4" font-size="13" font-weight="400" fill="#222222" text-anchor="middle" letter-spacing="-0.3" stroke="#ffffff" stroke-width="3.2" paint-order="stroke" stroke-linejoin="round">91.3</text>
<text x="545.5" y="427.4" font-size="13" font-weight="400" fill="#222222" text-anchor="middle" letter-spacing="-0.3" stroke="#ffffff" stroke-width="3.2" paint-order="stroke" stroke-linejoin="round">152.5</text>
<text x="637.8" y="477.4" font-size="13" font-weight="400" fill="#222222" text-anchor="middle" letter-spacing="-0.3" stroke="#ffffff" stroke-width="3.2" paint-order="stroke" stroke-linejoin="round">100.4</text>
<text x="729.2" y="482.2" font-size="13" font-weight="400" fill="#222222" text-anchor="middle" letter-spacing="-0.3" stroke="#ffffff" stroke-width="3.2" paint-order="stroke" stroke-linejoin="round">96.0</text>
<text x="821.8" y="456.5" font-size="13" font-weight="400" fill="#222222" text-anchor="middle" letter-spacing="-0.3" stroke="#ffffff" stroke-width="3.2" paint-order="stroke" stroke-linejoin="round">122.5</text>
<text x="912.9" y="445.9" font-size="13" font-weight="400" fill="#222222" text-anchor="middle" letter-spacing="-0.3" stroke="#ffffff" stroke-width="3.2" paint-order="stroke" stroke-linejoin="round">133.1</text>
<text x="1004.6" y="512.4" font-size="13" font-weight="400" fill="#222222" text-anchor="middle" letter-spacing="-0.3" stroke="#ffffff" stroke-width="3.2" paint-order="stroke" stroke-linejoin="round">65.4</text>
<text x="1096.7" y="463.4" font-size="13" font-weight="400" fill="#222222" text-anchor="middle" letter-spacing="-0.3" stroke="#ffffff" stroke-width="3.2" paint-order="stroke" stroke-linejoin="round">115.4</text>
<text x="1188.75" y="483.75" font-size="13" font-weight="400" fill="#222222" text-anchor="middle" letter-spacing="-0.3" stroke="#ffffff" stroke-width="3.2" paint-order="stroke" stroke-linejoin="round">94.4</text>
<rect x="572.3" y="623.6" width="13" height="12" rx="1.5" fill="#000033"/>
<text x="593.6" y="634" font-size="13.2" font-weight="400" fill="#333333" text-anchor="start" letter-spacing="-0.3">Actual</text>
<rect x="645.3" y="623.6" width="12.8" height="12" rx="1.5" fill="#8c9cac"/>
<text x="666.6" y="634" font-size="13.2" font-weight="400" fill="#333333" text-anchor="start" letter-spacing="-0.3">PY</text>
<circle cx="706.2" cy="629.7" r="6.3" fill="#000033"/>
<text x="722.4" y="634" font-size="13.2" font-weight="400" fill="#333333" text-anchor="start" letter-spacing="-0.3">Target</text>
</svg>
</body></html>
